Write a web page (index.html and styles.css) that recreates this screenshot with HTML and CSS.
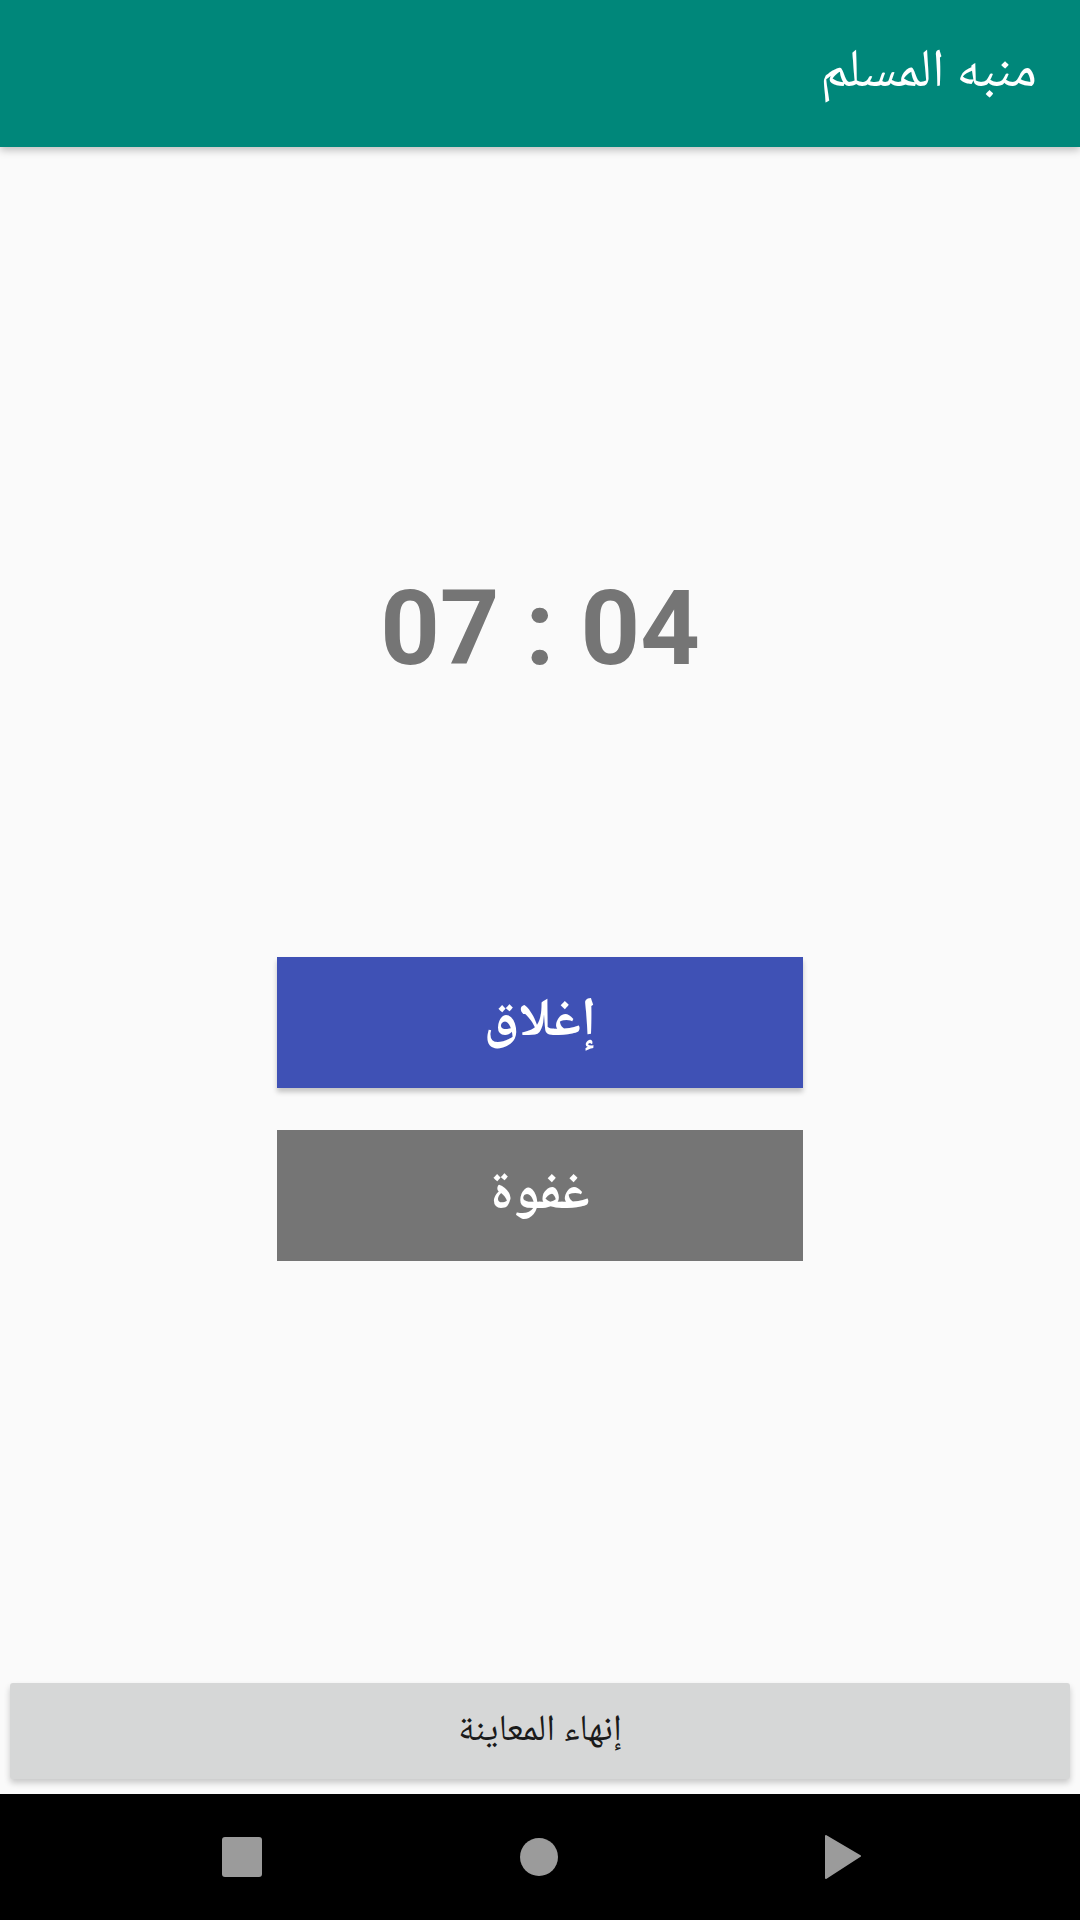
FILE: index.html
```html
<!DOCTYPE html>
<html lang="ar" dir="rtl">
<head>
<meta charset="utf-8">
<link rel="stylesheet" href="styles.css">
</head>
<body>
<div class="screen">
  <header class="appbar">
    <h1 class="title">منبه المسلم</h1>
  </header>
  <main class="content">
    <div class="time" dir="ltr">07 : 04</div>
    <div class="actions">
      <button class="btn btn-close">إغلاق</button>
      <button class="btn btn-snooze">غفوة</button>
    </div>
  </main>
  <div class="footer">
    <button class="end-btn">إنهاء المعاينة</button>
  </div>
  <nav class="navbar" dir="ltr">
    <span class="nav-square"></span>
    <span class="nav-circle"></span>
    <svg class="nav-back" width="38" height="44" viewBox="0 0 38 44"><path d="M2 1 L36 21 L2 43 Z" fill="#9b9b9b" stroke="#9b9b9b" stroke-width="2" stroke-linejoin="round"/></svg>
  </nav>
</div>
</body>
</html>
```

FILE: styles.css
```css
* { box-sizing: border-box; }
html, body {
  margin: 0;
  padding: 0;
}
body {
  background: #fafafa;
  font-family: "Noto Naskh Arabic", "Noto Sans Arabic", "DejaVu Sans", sans-serif;
}
.screen {
  width: 1080px;
  height: 1920px;
  display: flex;
  flex-direction: column;
  overflow: hidden;
}
.appbar {
  height: 147px;
  flex: 0 0 147px;
  background: #00877a;
  display: flex;
  align-items: center;
  padding: 0 43px;
  box-shadow: 0 3px 8px rgba(0,0,0,0.25);
  position: relative;
  z-index: 1;
}
.title {
  margin: 0;
  color: #ffffff;
  font-weight: normal;
  font-size: 54px;
  line-height: 1;
}
.content {
  flex: 1;
  display: flex;
  flex-direction: column;
  align-items: center;
}
.time {
  margin-top: 430px;
  font-family: Roboto, "Liberation Sans", sans-serif;
  font-weight: 700;
  font-size: 104px;
  line-height: 104px;
  color: #757575;
}
.actions {
  margin-top: 276px;
  display: flex;
  flex-direction: column;
  gap: 42px;
}
.btn {
  width: 526px;
  height: 131px;
  border: none;
  border-radius: 0;
  font-family: inherit;
  font-weight: 700;
  font-size: 54px;
  color: #ffffff;
  padding: 0;
}
.btn-close {
  background: #3f51b5;
  box-shadow: 0 4px 5px rgba(0,0,0,0.22);
}
.btn-snooze {
  background: #757575;
}
.footer {
  padding: 0 10px 15px 10px;
}
.end-btn {
  width: 100%;
  height: 96px;
  background: #d6d7d7;
  border: none;
  border-radius: 3px;
  font-family: inherit;
  font-size: 37px;
  color: #1a1a1a;
  box-shadow: 0 4px 6px rgba(0,0,0,0.2);
}
.navbar {
  height: 126px;
  flex: 0 0 126px;
  background: #000;
  position: relative;
}
.nav-square {
  position: absolute;
  left: 222px;
  top: 43px;
  width: 40px;
  height: 40px;
  background: #9b9b9b;
  border-radius: 3px;
}
.nav-circle {
  position: absolute;
  left: 520px;
  top: 44px;
  width: 38px;
  height: 38px;
  background: #9b9b9b;
  border-radius: 50%;
}
.nav-back {
  position: absolute;
  left: 824px;
  top: 41px;
}
```
